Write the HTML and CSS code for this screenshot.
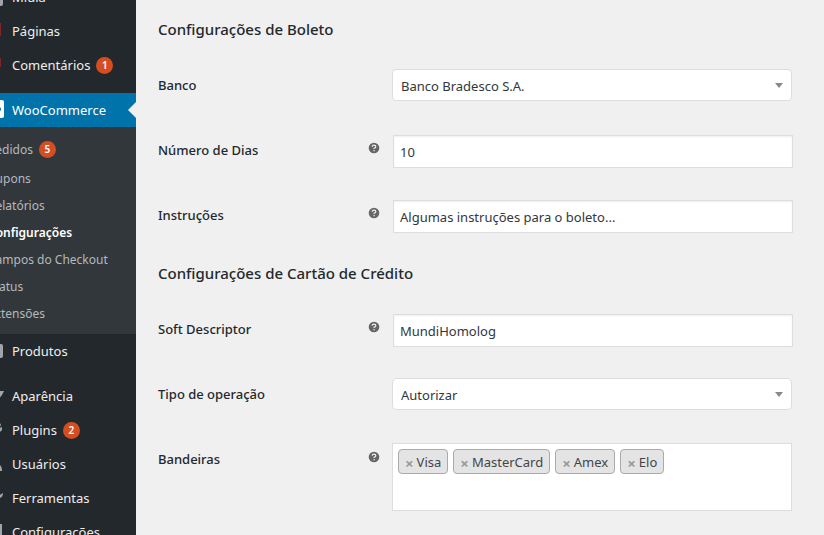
FILE: index.html
```html
<!DOCTYPE html>
<html lang="pt-BR">
<head>
<meta charset="utf-8">
<meta name="viewport" content="width=device-width, initial-scale=1">
<title>WooCommerce</title>
<link rel="stylesheet" href="styles.css">
</head>
<body>
<div class="page">
  <nav class="sidebar">
    <ul class="menu">
      <li><a class="item" href="#"><svg class="icon" viewBox="0 0 20 20"><path d="M2 3h10v8H2zM13 8h6v9q0 2-2 2h-4z"/></svg>Mídia</a></li>
      <li><a class="item" href="#"><svg class="icon dark" viewBox="0 0 20 20"><path d="M5 2h12v13H5z"/></svg>Páginas</a></li>
      <li><a class="item" href="#"><svg class="icon dark" viewBox="0 0 20 20"><path d="M4 3h13v9H9l-4 4v-4H4z"/></svg>Comentários <span class="count">1</span></a></li>
      <li class="group">
        <a class="item current" href="#"><svg class="icon" viewBox="0 0 20 20"><path class="white" d="M0 0h18q2 0 2 2v14q0 2-2 2H0z"/><path class="blue" d="M3 7h12q2 0 2 2t-2 3H3z"/></svg>WooCommerce</a>
        <ul class="submenu">
          <li><a class="subitem tall" href="#">Pedidos <span class="count">5</span></a></li>
          <li><a class="subitem" href="#">Cupons</a></li>
          <li><a class="subitem" href="#">Relatórios</a></li>
          <li><a class="subitem active" href="#">Configurações</a></li>
          <li><a class="subitem" href="#">Campos do Checkout</a></li>
          <li><a class="subitem" href="#">Status</a></li>
          <li><a class="subitem" href="#">Extensões</a></li>
        </ul>
      </li>
      <li><a class="item" href="#"><svg class="icon" viewBox="0 0 20 20"><path d="M2 3h15q2 0 2 2v10q0 2-3 2H2z"/></svg>Produtos</a></li>
      <li class="group"><a class="item" href="#"><svg class="icon" viewBox="0 0 20 20"><path d="M9 10 15 5h5l-2 4-5 6q-4 4-9 2 4-1 5-7z"/></svg>Aparência</a></li>
      <li><a class="item" href="#"><svg class="icon" viewBox="0 0 20 20"><path d="m11 4 2 2 3-3 1 2-2 3 3-1v3l-5 5q-3 3-6 1l-4 3-1-1 3-4q-2-3 1-6z"/></svg>Plugins <span class="count">2</span></a></li>
      <li><a class="item" href="#"><svg class="icon" viewBox="0 0 20 20"><circle cx="10" cy="6" r="4"/><path d="M3 17q0-6 4-6h8q3 0 3 6z"/></svg>Usuários</a></li>
      <li><a class="item" href="#"><svg class="icon" viewBox="0 0 20 20"><path d="M19 5q0 4-3 5-2 2-4 1l-6 6q-2 1-3-1t0-2l6-6q-1-5 5-6l-2 3 2 3z"/></svg>Ferramentas</a></li>
      <li><a class="item" href="#"><svg class="icon" viewBox="0 0 20 20"><path d="M2 2h16v16H2z"/></svg>Configurações</a></li>
    </ul>
  </nav>
  <main class="content">
    <form>
      <h2 class="heading">Configurações de Boleto</h2>
      <div class="row">
        <label class="label" for="banco">Banco</label>
        <div class="field"><select class="select" id="banco"><option>Banco Bradesco S.A.</option></select></div>
      </div>
      <div class="row">
        <label class="label" for="dias">Número de Dias</label>
        <svg class="help" viewBox="0 0 12 12"><circle cx="6" cy="6" r="5.3"/><path d="M4.2 4.8Q4.2 3.2 6 3.2T7.8 4.7Q7.8 5.6 6.1 6.3V7M6.1 8v1.3"/></svg>
        <div class="field"><input class="input" id="dias" type="text" value="10"></div>
      </div>
      <div class="row">
        <label class="label" for="instrucoes">Instruções</label>
        <svg class="help" viewBox="0 0 12 12"><circle cx="6" cy="6" r="5.3"/><path d="M4.2 4.8Q4.2 3.2 6 3.2T7.8 4.7Q7.8 5.6 6.1 6.3V7M6.1 8v1.3"/></svg>
        <div class="field"><input class="input" id="instrucoes" type="text" value="Algumas instruções para o boleto..."></div>
      </div>
      <h2 class="heading">Configurações de Cartão de Crédito</h2>
      <div class="row">
        <label class="label" for="descriptor">Soft Descriptor</label>
        <svg class="help" viewBox="0 0 12 12"><circle cx="6" cy="6" r="5.3"/><path d="M4.2 4.8Q4.2 3.2 6 3.2T7.8 4.7Q7.8 5.6 6.1 6.3V7M6.1 8v1.3"/></svg>
        <div class="field"><input class="input" id="descriptor" type="text" value="MundiHomolog"></div>
      </div>
      <div class="row">
        <label class="label" for="operacao">Tipo de operação</label>
        <div class="field"><select class="select" id="operacao"><option>Autorizar</option></select></div>
      </div>
      <div class="row">
        <span class="label" id="bandeiras">Bandeiras</span>
        <svg class="help" viewBox="0 0 12 12"><circle cx="6" cy="6" r="5.3"/><path d="M4.2 4.8Q4.2 3.2 6 3.2T7.8 4.7Q7.8 5.6 6.1 6.3V7M6.1 8v1.3"/></svg>
        <div class="field">
          <ul class="tags" aria-labelledby="bandeiras">
            <li class="tag"><button class="remove" type="button">×</button>Visa</li>
            <li class="tag"><button class="remove" type="button">×</button>MasterCard</li>
            <li class="tag"><button class="remove" type="button">×</button>Amex</li>
            <li class="tag"><button class="remove" type="button">×</button>Elo</li>
          </ul>
        </div>
      </div>
    </form>
  </main>
</div>
</body>
</html>
```
FILE: styles.css
```css
* { box-sizing: border-box; }
body {
  margin: 0;
  background: #f0f0f0;
  color: #23282d;
  font: 13px/20px "Noto Sans", "Open Sans", sans-serif;
}
ul { list-style: none; margin: 0; padding: 0; }
a { color: inherit; text-decoration: none; }

.page { display: flex; height: 100vh; overflow: hidden; }

/* Sidebar: scrolled slightly past its top left corner */
.sidebar {
  flex: none;
  width: 160px;
  margin-left: -24px;
  background: #23282d;
  color: #eee;
}
.menu { margin-top: -20px; }
.group { margin-top: 11px; }
.item {
  display: flex;
  align-items: center;
  height: 34px;
  padding-left: 8px;
}
.icon { width: 20px; height: 20px; margin-right: 8px; fill: #a0a5aa; }
.icon.dark { fill: #7d2630; }
.icon .white { fill: #fff; }
.icon .blue { fill: #0073aa; }
.item.current { background: #0073aa; color: #fff; }
.item.current::after {
  content: "";
  margin-left: auto;
  border: 8px solid transparent;
  border-left: 0;
  border-right-color: #f0f0f0;
}
.count {
  width: 17px;
  height: 17px;
  margin-left: 6px;
  border-radius: 50%;
  background: #d54e21;
  color: #fff;
  font-size: 10px;
  line-height: 17px;
  font-weight: 600;
  text-align: center;
}
.submenu { padding: 7px 0; background: #32373c; color: #b4b9be; }
.subitem {
  display: flex;
  align-items: center;
  height: 27px;
  padding-left: 12px;
  font-size: 12px;
  white-space: nowrap;
}
.subitem.tall { height: 31px; }
.subitem.active { color: #fff; font-weight: 600; }

/* Settings form */
.content { flex: 1; min-width: 0; padding: 5px 30px 0 22px; }
.heading {
  margin: 0;
  padding: 14px 0 15px;
  font-size: 15px;
  line-height: 20px;
  font-weight: 500;
}
.row {
  display: grid;
  grid-template-columns: 210px 24px minmax(0, 402px);
  min-height: 65px;
  padding-top: 15px;
}
.label { padding-top: 6px; font-weight: 500; }
.help { width: 12px; height: 12px; margin-top: 8px; fill: #666; }
.help path { fill: none; stroke: #f0f0f0; stroke-width: 1.2; }
.field { grid-column: 3; }
.input, .select {
  display: block;
  border: 1px solid #ddd;
  background: #fff;
  color: #32373c;
  font: inherit;
}
.input {
  width: calc(100% - 2px);
  height: 33px;
  margin: 1px;
  padding: 0 6px;
  box-shadow: inset 0 1px 2px rgba(0, 0, 0, .07);
}
.select {
  width: calc(100% - 2px);
  height: 32px;
  padding: 1px 8px 0;
  border-radius: 4px;
  appearance: none;
  background: #fff url("data:image/svg+xml,%3Csvg xmlns='http://www.w3.org/2000/svg' width='8' height='5'%3E%3Cpath d='M0 0h8L4 5z' fill='%23888'/%3E%3C/svg%3E") no-repeat right 8px center;
}
.tags {
  display: flex;
  flex-wrap: wrap;
  align-content: flex-start;
  gap: 5px;
  width: calc(100% - 2px);
  height: 68px;
  padding: 5px;
  border: 1px solid #ddd;
  background: #fff;
}
.tag {
  display: flex;
  align-items: center;
  height: 25px;
  padding: 0 6px;
  border: 1px solid #aaa;
  border-radius: 4px;
  background: #e4e4e4;
  color: #444;
}
.remove {
  margin: 0 3px 0 0;
  padding: 2px 0 0;
  border: 0;
  background: none;
  color: #999;
  font: bold 15px/20px "Noto Sans", sans-serif;
}
```
